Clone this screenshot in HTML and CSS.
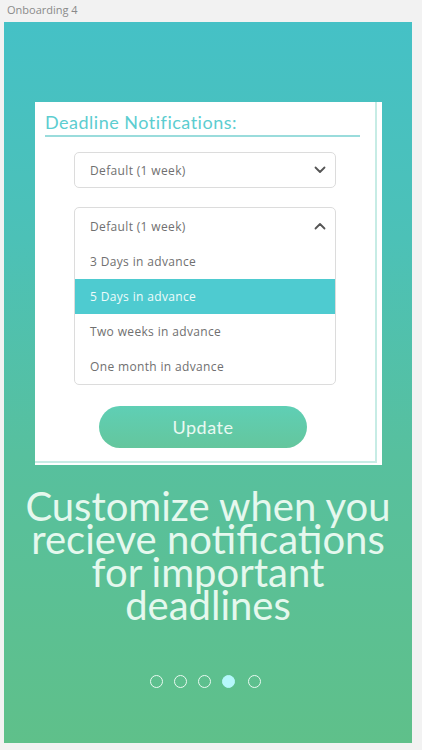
FILE: index.html
```
<!DOCTYPE html>
<html>
<head>
<meta charset="utf-8">
<link rel="stylesheet" href="styles.css">
</head>
<body>
<div class="label">Onboarding 4</div>
<div class="board">
  <div class="card">
    <div class="card-inner">
      <div class="title">Deadline Notifications:</div>
      <div class="select">
        <span>Default (1 week)</span>
        <svg class="chev" width="12" height="8" viewBox="0 0 12 8"><path d="M1.5 1.5 L6 6 L10.5 1.5" fill="none" stroke="#555" stroke-width="1.8" stroke-linecap="round" stroke-linejoin="round"/></svg>
      </div>
      <div class="dropdown">
        <div class="dd-head">
          <span>Default (1 week)</span>
          <svg class="chev" width="12" height="8" viewBox="0 0 12 8"><path d="M1.5 6.5 L6 2 L10.5 6.5" fill="none" stroke="#555" stroke-width="1.8" stroke-linecap="round" stroke-linejoin="round"/></svg>
        </div>
        <div class="opt">3 Days in advance</div>
        <div class="opt active">5 Days in advance</div>
        <div class="opt">Two weeks in advance</div>
        <div class="opt">One month in advance</div>
      </div>
      <div class="btn-row"><div class="btn">Update</div></div>
    </div>
  </div>
  <div class="headline">
    <div class="hl-line">Customize when you</div>
    <div class="hl-line">recieve notifications</div>
    <div class="hl-line">for important</div>
    <div class="hl-line">deadlines</div>
  </div>
  <div class="dots">
    <span class="dot"></span>
    <span class="dot"></span>
    <span class="dot"></span>
    <span class="dot filled"></span>
    <span class="dot last"></span>
  </div>
</div>
</body>
</html>
```
FILE: styles.css
```
* { box-sizing: border-box; }
html, body { margin: 0; padding: 0; }
body {
  width: 422px;
  height: 750px;
  background: #f2f2f2;
  font-family: "Lato", "Open Sans", sans-serif;
  overflow: hidden;
}
.label {
  height: 22px;
  padding: 2px 0 0 7px;
  font-family: "Open Sans", sans-serif;
  font-size: 11px;
  color: #8a8a8a;
  line-height: 15px;
}
.board {
  margin-left: 4px;
  width: 408px;
  height: 721px;
  background: linear-gradient(180deg, #45c1c6 0%, #4cc1b7 30%, #57c09e 60%, #5fc08a 100%);
  padding-top: 80px;
  display: flex;
  flex-direction: column;
  align-items: center;
}
.card {
  margin-left: 31px;
  align-self: flex-start;
  width: 347px;
  height: 363px;
  background: #fff;
  padding: 0 5px 2px 0;
}
.card-inner {
  height: 100%;
  border-right: 2px solid #c7ece5;
  border-bottom: 2px solid #c7ece5;
  padding: 9px 0 0 0;
}
.title {
  margin-left: 10px;
  width: 315px;
  font-size: 18px;
  letter-spacing: 0.5px;
  color: #5ccdd0;
  line-height: 23px;
  padding-bottom: 1px;
  border-bottom: 2px solid #9adcdc;
}
.select {
  margin: 15px 0 0 39px;
  width: 262px;
  height: 36px;
  border: 1px solid #dcdcdc;
  border-radius: 5px;
  display: flex;
  align-items: center;
  justify-content: space-between;
  padding: 0 9px 0 15px;
  font-family: "Open Sans", sans-serif;
  font-size: 12px;
  letter-spacing: 0.35px;
  color: #707070;
}
.dropdown {
  margin: 19px 0 0 39px;
  width: 262px;
  border: 1px solid #dcdcdc;
  border-radius: 5px;
  overflow: hidden;
  font-family: "Open Sans", sans-serif;
  font-size: 12px;
  letter-spacing: 0.35px;
  color: #707070;
}
.dd-head {
  height: 36px;
  display: flex;
  align-items: center;
  justify-content: space-between;
  padding: 0 9px 0 15px;
}
.opt {
  height: 35px;
  display: flex;
  align-items: center;
  padding-left: 15px;
}
.opt.active {
  background: #4ecbd0;
  color: #eefbfb;
}
.btn-row {
  margin-top: 21px;
  padding-left: 64px;
}
.btn {
  width: 208px;
  height: 42px;
  border-radius: 21px;
  background: linear-gradient(180deg, #5fcfb5 0%, #64c69d 100%);
  color: #eaf9f2;
  font-size: 18px;
  letter-spacing: 0.5px;
  display: flex;
  align-items: center;
  justify-content: center;
}
.headline {
  margin-top: 25px;
  width: 408px;
  text-align: center;
  font-size: 40px;
  line-height: 33px;
  color: #e5f8ee;
  white-space: nowrap;
}
.hl-line {
  height: 33px;
}
.dots {
  margin-top: 53px;
  display: flex;
  gap: 11px;
  margin-left: -6px;
}
.dot {
  width: 13px;
  height: 13px;
  border-radius: 50%;
  border: 1.5px solid #eafaf2;
}
.dot.last { margin-left: 2px; }
.dot.filled {
  background: #b5f7fb;
  border-color: #b5f7fb;
}
```
